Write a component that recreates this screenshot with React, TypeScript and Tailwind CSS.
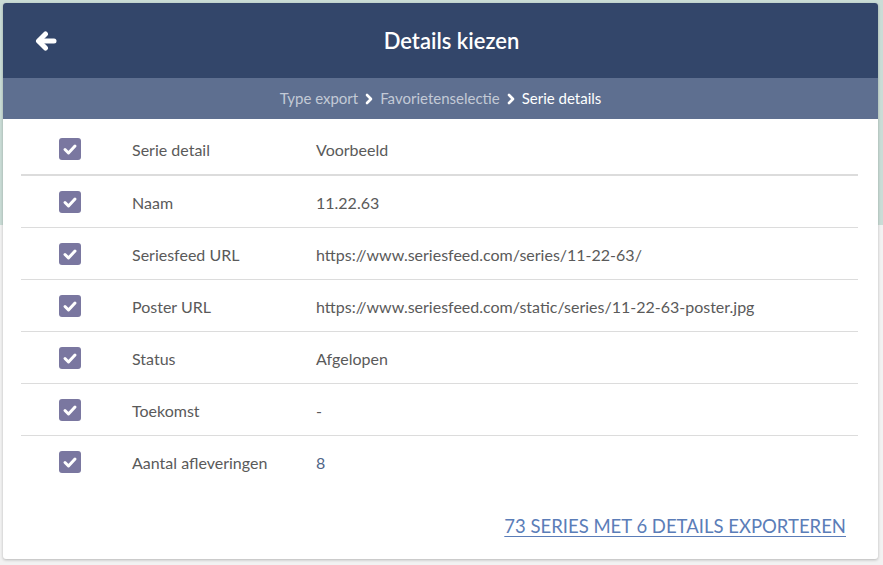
const rows = [
  { label: "Naam", value: "11.22.63" },
  { label: "Seriesfeed URL", value: "https://www.seriesfeed.com/series/11-22-63/" },
  { label: "Poster URL", value: "https://www.seriesfeed.com/static/series/11-22-63-poster.jpg" },
  { label: "Status", value: "Afgelopen" },
  { label: "Toekomst", value: "-" },
  { label: "Aantal afleveringen", value: "8", number: true },
];

function Check() {
  return (
    <span className="flex h-[22px] w-[22px] items-center justify-center rounded-[3px] bg-[#7a77a0]">
      <svg viewBox="0 0 16 16" className="h-[16px] w-[16px]">
        <polyline points="3,8.5 6.5,12 13,5" fill="none" stroke="#fff" strokeWidth="3" strokeLinecap="round" strokeLinejoin="round" />
      </svg>
    </span>
  );
}

function Chevron() {
  return (
    <svg viewBox="0 0 10 12" className="mx-[6px] h-[12px] w-[10px]">
      <polyline points="3,2 7,6 3,10" fill="none" stroke="#fff" strokeWidth="2.6" strokeLinecap="round" strokeLinejoin="round" />
    </svg>
  );
}

export default function App() {
  return (
    <div className="h-[565px] w-full bg-[linear-gradient(to_bottom,#cadcd6_225px,#f2f2f2_225px)] pt-[3px] pl-[3px] font-['Lato','Open_Sans',sans-serif]">
      <div className="flex h-[556px] w-[875px] flex-col overflow-hidden rounded-[3px] bg-white shadow-[0_1px_3px_rgba(0,0,0,0.25)]">
        <div className="flex h-[75px] items-center bg-[#33466a] px-[32px]">
          <svg viewBox="0 0 22 22" className="h-[22px] w-[22px]">
            <g fill="none" stroke="#fff" strokeWidth="5" strokeLinecap="round" strokeLinejoin="round">
              <polyline points="10.5,4 3.5,11 10.5,18" />
              <line x1="4" y1="11" x2="19" y2="11" />
            </g>
          </svg>
          <h1 className="flex-1 text-center text-[22px] font-semibold text-white">
            Details kiezen
          </h1>
        </div>

        <div className="flex h-[41px] items-center justify-center bg-[#5e6f90] text-[15px]">
          <span className="text-[#c3cad6]">Type export</span>
          <Chevron />
          <span className="text-[#c3cad6]">Favorietenselectie</span>
          <Chevron />
          <span className="text-white">Serie details</span>
        </div>

        <div className="pt-[4px] pl-[18px] pr-[20px] text-[16px] text-[#5a5a5a]">
          <div className="grid h-[53px] grid-cols-[111px_184px_1fr] items-center border-b-2 border-[#dcdcdc]">
            <div className="pl-[38px]">
              <Check />
            </div>
            <div className="pt-[2px]">Serie detail</div>
            <div className="pt-[2px]">Voorbeeld</div>
          </div>
          {rows.map((r, i) => (
            <div
              key={r.label}
              className={`grid h-[52px] grid-cols-[111px_184px_1fr] items-center ${
                i < rows.length - 1 ? "border-b border-[#dcdcdc]" : ""
              }`}
            >
              <div className="pl-[38px]">
                <Check />
              </div>
              <div className="pt-[2px]">{r.label}</div>
              <div className={`pt-[2px] ${r.number ? "text-[#4f6587]" : ""}`}>{r.value}</div>
            </div>
          ))}
        </div>

        <div className="mt-auto flex justify-end pr-[32px] pb-[18px]">
          <a href="#" className="text-[18.5px] text-[#5b7db8] underline underline-offset-[3px]">
            73 SERIES MET 6 DETAILS EXPORTEREN
          </a>
        </div>
      </div>
    </div>
  );
}
